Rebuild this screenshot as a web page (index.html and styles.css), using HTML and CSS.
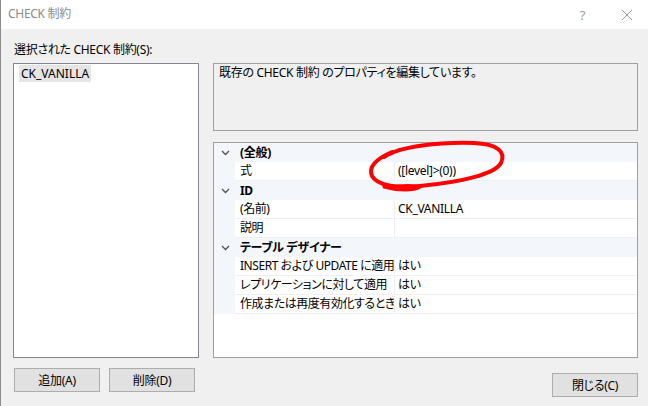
FILE: index.html
```html
<!DOCTYPE html>
<html lang="ja">
    <head>
        <meta charset="UTF-8">
        <title>CHECK 制約</title>
        <link rel="stylesheet" href="styles.css">
    </head>
    <body>
        <div class="window">
            <div class="titlebar">
                <span class="title">CHECK 制約</span>
                <span class="help">?</span>
                <svg class="close-x" width="12" height="12" viewBox="0 0 12 12">
                    <path d="M1 1 L11 11 M11 1 L1 11" stroke="#9a9a9a" stroke-width="1" fill="none"/>
                </svg>
            </div>

            <div class="content">
                <div class="left-col">
                    <div class="list-label">選択された CHECK 制約(S):</div>
                    <div class="listbox">
                        <span class="list-item">CK_VANILLA</span>
                    </div>
                    <div class="button-row">
                        <button class="btn">追加(A)</button>
                        <button class="btn">削除(D)</button>
                    </div>
                </div>

                <div class="right-col">
                    <div class="desc">既存の CHECK 制約 のプロパティを編集しています。</div>

                    <div class="propgrid">
                        <div class="cat-row">
                            <span class="chev"><svg width="9" height="6" viewBox="0 0 9 6"><path d="M1 1 L4.5 4.5 L8 1" stroke="#505050" stroke-width="1.3" fill="none"/></svg></span>
                            <span class="cat-name">(全般)</span>
                        </div>
                        <div class="prop-row">
                            <span class="gutter"></span>
                            <span class="prop-name">式</span>
                            <span class="prop-value">([level]&gt;(0))</span>
                        </div>
                        <div class="cat-row">
                            <span class="chev"><svg width="9" height="6" viewBox="0 0 9 6"><path d="M1 1 L4.5 4.5 L8 1" stroke="#505050" stroke-width="1.3" fill="none"/></svg></span>
                            <span class="cat-name">ID</span>
                        </div>
                        <div class="prop-row">
                            <span class="gutter"></span>
                            <span class="prop-name">(名前)</span>
                            <span class="prop-value">CK_VANILLA</span>
                        </div>
                        <div class="prop-row">
                            <span class="gutter"></span>
                            <span class="prop-name">説明</span>
                            <span class="prop-value"></span>
                        </div>
                        <div class="cat-row">
                            <span class="chev"><svg width="9" height="6" viewBox="0 0 9 6"><path d="M1 1 L4.5 4.5 L8 1" stroke="#505050" stroke-width="1.3" fill="none"/></svg></span>
                            <span class="cat-name">テーブル デザイナー</span>
                        </div>
                        <div class="prop-row">
                            <span class="gutter"></span>
                            <span class="prop-name">INSERT および UPDATE に適用</span>
                            <span class="prop-value">はい</span>
                        </div>
                        <div class="prop-row">
                            <span class="gutter"></span>
                            <span class="prop-name">レプリケーションに対して適用</span>
                            <span class="prop-value">はい</span>
                        </div>
                        <div class="prop-row">
                            <span class="gutter"></span>
                            <span class="prop-name">作成または再度有効化するときに既存のデータをチェック</span>
                            <span class="prop-value">はい</span>
                        </div>
                    </div>

                    <div class="close-row">
                        <button class="btn">閉じる(C)</button>
                    </div>
                </div>
            </div>

            <!-- hand-drawn red circle over the expression value -->
            <svg class="scribble" width="648" height="406" viewBox="0 0 648 406">
                <path d="M384 157 C400 146, 440 142, 474 143 C498 144, 506 152, 501 163 C495 174, 462 182, 420 186 C396 189, 377 185, 372 176 C368 167, 376 159, 392 152"
                      stroke="#ff0000" stroke-width="4" fill="none" stroke-linecap="round"/>
                <path d="M384 187 C398 191, 414 191, 420 187 C416 185, 400 185, 392 187"
                      stroke="#ff0000" stroke-width="3" fill="none" stroke-linecap="round"/>
            </svg>
        </div>
    </body>
</html>
```

FILE: styles.css
```css
* {
    box-sizing: border-box;
}

body {
    margin: 0;
    background: #f0f0f0;
    font-family: "Noto Sans", "Noto Sans CJK JP", sans-serif;
    font-size: 12px;
    font-feature-settings: "palt";
    letter-spacing: -0.3px;
    color: #000;
}

.window {
    position: relative;
    width: 648px;
    height: 406px;
    border-left: 1px solid #8c8c8c;
    background: #f0f0f0;
    overflow: hidden;
}

.titlebar {
    height: 29px;
    background: #fff;
    display: flex;
    align-items: center;
    padding-left: 7px;
}

.title {
    flex: 1;
    color: #8a8a8a;
    line-height: 16px;
    margin-top: -2px;
}

.help {
    color: #9a9a9a;
    font-size: 13px;
    margin-right: 36px;
}

.close-x {
    margin-right: 15px;
}

.content {
    display: flex;
    gap: 14px;
    padding: 13px 0 0 12px;
}

.left-col {
    width: 186px;
    display: flex;
    flex-direction: column;
}

.list-label {
    height: 21px;
    line-height: 16px;
    padding-left: 1px;
}

.listbox {
    height: 295px;
    background: #fff;
    border: 1px solid #828790;
    padding: 1px 5px;
}

.list-item {
    display: inline-block;
    background: #e5e5e5;
    line-height: 17px;
    padding: 0 2px;
    letter-spacing: 0;
}

.button-row {
    display: flex;
    gap: 9px;
    margin-top: 10px;
    padding-left: 1px;
}

.btn {
    width: 86px;
    height: 24px;
    background: #e1e1e1;
    border: 1px solid #adadad;
    font-family: inherit;
    font-size: 12px;
    font-feature-settings: "palt";
    letter-spacing: -0.3px;
    color: #000;
    padding: 0;
}

.right-col {
    width: 425px;
    padding-top: 21px;
    display: flex;
    flex-direction: column;
}

.desc {
    height: 68px;
    border: 1px solid #a0a0a0;
    padding: 1px 5px;
    line-height: 16px;
    margin-bottom: 11px;
}

.propgrid {
    height: 216px;
    background: #fff;
    border: 1px solid #a0a0a0;
}

.cat-row {
    display: flex;
    align-items: center;
    height: 19px;
    background: #f3f6fb;
    font-weight: bold;
}

.chev {
    width: 21px;
    display: flex;
    justify-content: center;
    padding-left: 1px;
}

.cat-name {
    padding-left: 5px;
    line-height: 16px;
}

.prop-row {
    display: flex;
    height: 19px;
    line-height: 18px;
}

.gutter {
    width: 21px;
    background: #f3f6fb;
}

.prop-name {
    width: 160px;
    padding-left: 5px;
    white-space: nowrap;
    overflow: hidden;
    letter-spacing: -0.45px;
    border-right: 1px solid #f0f0f0;
    border-bottom: 1px solid #f0f0f0;
}

.prop-value {
    flex: 1;
    padding-left: 3px;
    white-space: nowrap;
    border-bottom: 1px solid #f0f0f0;
}

.close-row {
    display: flex;
    justify-content: flex-end;
    margin-top: 15px;
}

.scribble {
    position: absolute;
    left: -1px;
    top: 0;
    pointer-events: none;
}
```
